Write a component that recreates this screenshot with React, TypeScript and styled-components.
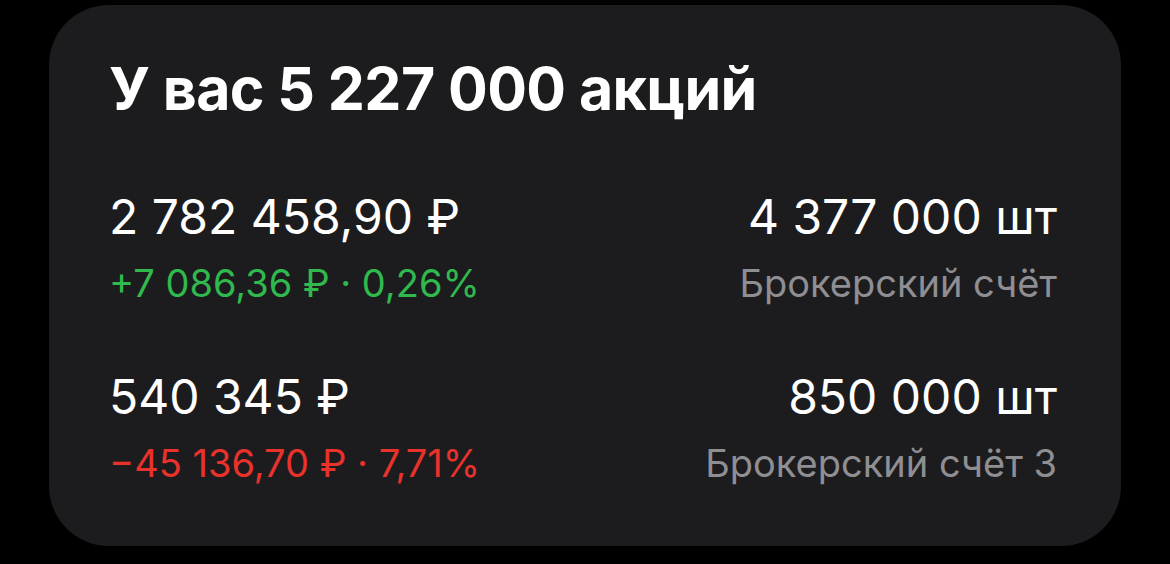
import React from 'react';
import styled, { createGlobalStyle } from 'styled-components';

const GlobalStyle = createGlobalStyle`
  html, body {
    margin: 0;
    padding: 0;
    background: #000;
  }
  body {
    font-family: Inter, "Noto Sans", "Liberation Sans", sans-serif;
    -webkit-font-smoothing: antialiased;
  }
`;

type Holding = {
  value: string;
  change: string;
  up: boolean;
  count: string;
  account: string;
};

const holdings: Holding[] = [
  {
    value: '2 782 458,90 ₽',
    change: '+7 086,36 ₽ · 0,26%',
    up: true,
    count: '4 377 000 шт',
    account: 'Брокерский счёт',
  },
  {
    value: '540 345 ₽',
    change: '−45 136,70 ₽ · 7,71%',
    up: false,
    count: '850 000 шт',
    account: 'Брокерский счёт 3',
  },
];

function App() {
  return (
    <Page>
      <GlobalStyle />
      <Card>
        <Title>У вас 5 227 000 акций</Title>
        <List>
          {holdings.map((h) => (
            <Row key={h.account}>
              <Column>
                <Primary>{h.value}</Primary>
                <Change $up={h.up}>{h.change}</Change>
              </Column>
              <Column $right>
                <Primary>{h.count}</Primary>
                <Account>{h.account}</Account>
              </Column>
            </Row>
          ))}
        </List>
      </Card>
    </Page>
  );
}

const Page = styled.div`
  width: 1170px;
  height: 564px;
  padding: 5px 49px 0 49px;
  box-sizing: border-box;
  background: #000;
`;

const Card = styled.section`
  width: 1072px;
  height: 541px;
  box-sizing: border-box;
  background: #1c1c1e;
  border-radius: 60px;
  padding: 49px 64px 0 60px;
  display: flex;
  flex-direction: column;
`;

const Title = styled.h1`
  margin: 0;
  color: #fff;
  font-size: 59px;
  font-weight: 700;
  line-height: 70px;
  letter-spacing: -0.6px;
`;

const List = styled.div`
  display: flex;
  flex-direction: column;
  gap: 62px;
  margin-top: 64px;
`;

const Row = styled.div`
  display: flex;
  justify-content: space-between;
  align-items: flex-start;
`;

const Column = styled.div<{ $right?: boolean }>`
  display: flex;
  flex-direction: column;
  gap: 14px;
  align-items: ${(p) => (p.$right ? 'flex-end' : 'flex-start')};
`;

const Primary = styled.div`
  color: #fff;
  font-size: 48px;
  font-weight: 400;
  line-height: 58px;
`;

const Change = styled.div<{ $up: boolean }>`
  color: ${(p) => (p.$up ? '#30b94d' : '#e8322b')};
  font-size: 38px;
  line-height: 46px;
`;

const Account = styled.div`
  color: #8e8e93;
  font-size: 38px;
  line-height: 46px;
`;

export default App;
